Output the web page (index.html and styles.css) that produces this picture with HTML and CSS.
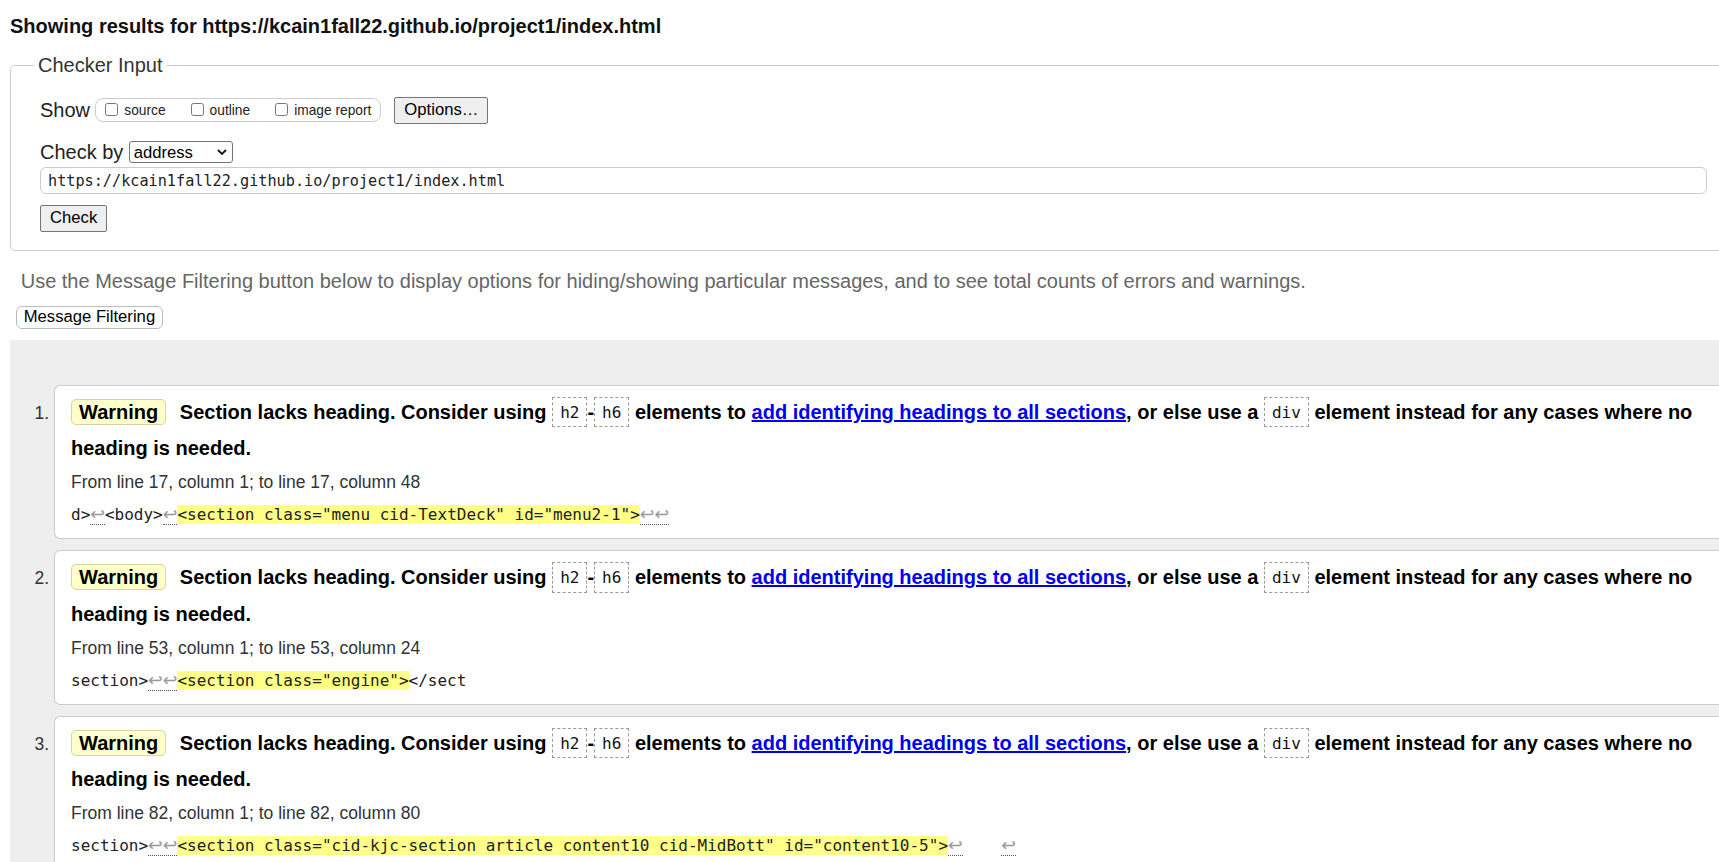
FILE: index.html
```html
<!DOCTYPE html>
<html lang="en">
<head>
<meta charset="utf-8">
<title>Showing results for https://kcain1fall22.github.io/project1/index.html</title>
<link rel="stylesheet" href="styles.css">
</head>
<body>
<div class="page">
  <h2 class="title">Showing results for https://kcain1fall22.github.io/project1/index.html</h2>
  <fieldset class="checker">
    <legend>Checker Input</legend>
    <div class="row row-show">
      <span class="label">Show</span>
      <span class="opts">
        <label class="opt"><input type="checkbox">source</label>
        <label class="opt"><input type="checkbox">outline</label>
        <label class="opt"><input type="checkbox">image report</label>
      </span>
      <button class="btn btn-options" type="button">Options…</button>
    </div>
    <div class="row row-by">
      <span class="label">Check by</span>
      <span class="select-wrap">
        <select class="select"><option>address</option></select>
        <svg class="chev" width="10" height="6" viewBox="0 0 10 6"><path d="M1 1 L5 5 L9 1" fill="none" stroke="#111" stroke-width="1.8"/></svg>
      </span>
    </div>
    <input class="url" type="text" value="https://kcain1fall22.github.io/project1/index.html">
    <div class="row row-check">
      <button class="btn" type="button">Check</button>
    </div>
  </fieldset>
  <p class="hint">Use the Message Filtering button below to display options for hiding/showing particular messages, and to see total counts of errors and warnings.</p>
  <button class="filter-btn" type="button">Message Filtering</button>
  <div class="results">
    <ol class="messages">
      <li class="msg">
        <p class="message"><span class="badge">Warning</span> Section lacks heading. Consider using <code class="code">h2</code>-<code class="code">h6</code> elements to <a href="#">add identifying headings to all sections</a>, or else use a <code class="code">div</code> element instead for any cases where no heading is needed.</p>
        <p class="location">From line 17, column 1; to line 17, column 48</p>
        <p class="extract">d&gt;<span class="lf">↩</span>&lt;body&gt;<span class="lf">↩</span><span class="hl">&lt;section class="menu cid-TextDeck" id="menu2-1"&gt;</span><span class="lf">↩↩</span></p>
      </li>
      <li class="msg">
        <p class="message"><span class="badge">Warning</span> Section lacks heading. Consider using <code class="code">h2</code>-<code class="code">h6</code> elements to <a href="#">add identifying headings to all sections</a>, or else use a <code class="code">div</code> element instead for any cases where no heading is needed.</p>
        <p class="location">From line 53, column 1; to line 53, column 24</p>
        <p class="extract">section&gt;<span class="lf">↩↩</span><span class="hl">&lt;section class="engine"&gt;</span>&lt;/sect</p>
      </li>
      <li class="msg">
        <p class="message"><span class="badge">Warning</span> Section lacks heading. Consider using <code class="code">h2</code>-<code class="code">h6</code> elements to <a href="#">add identifying headings to all sections</a>, or else use a <code class="code">div</code> element instead for any cases where no heading is needed.</p>
        <p class="location">From line 82, column 1; to line 82, column 80</p>
        <p class="extract">section&gt;<span class="lf">↩↩</span><span class="hl">&lt;section class="cid-kjc-section article content10 cid-MidBott" id="content10-5"&gt;</span><span class="lf">↩</span>    <span class="lf">↩</span></p>
      </li>
    </ol>
  </div>
</div>
</body>
</html>
```

FILE: styles.css
```css
html, body {
  margin: 0;
  padding: 0;
  overflow: hidden;
  background: #fff;
}

body {
  font-family: "Liberation Sans", Arial, sans-serif;
  color: #222;
}

.page {
  width: 1727px;
  padding: 0 10px;
}

.title {
  margin: 15px 0 15.6px;
  font-size: 20px;
  line-height: 23px;
  font-weight: bold;
  color: #111;
}

.checker {
  margin: 0;
  min-width: 0;
  padding: 0 29px 18px;
  border: 1px solid #ccc;
  border-radius: 5px;
}

.checker legend {
  margin-left: -6px;
  padding: 0 4px;
  font-size: 20px;
  line-height: 23px;
  color: #333;
}

.row {
  display: flex;
  align-items: center;
}

.label {
  font-size: 20px;
  line-height: 23px;
  margin-right: 5.3px;
  color: #222;
}

.row-show {
  margin-top: 20px;
  height: 27px;
}

.opts {
  display: flex;
  align-items: center;
  gap: 25px;
  height: 24px;
  box-sizing: border-box;
  padding: 0 9px;
  border: 1px solid #ccc;
  border-radius: 8px;
  font-size: 13.75px;
  color: #222;
}

.opt {
  display: flex;
  align-items: center;
}

.opt input {
  width: 13px;
  height: 13px;
  margin: 0 6px 1px 0;
}

.btn {
  height: 27px;
  padding: 0 9px;
  background: #efefef;
  border: 1px solid #767676;
  border-radius: 2px;
  font-family: "Liberation Sans", Arial, sans-serif;
  font-size: 16.67px;
  color: #000;
}

.btn-options {
  margin-left: 13px;
}

.row-by {
  margin-top: 17.4px;
  height: 23px;
}

.select-wrap {
  position: relative;
  display: inline-block;
  height: 22px;
}

.select {
  appearance: none;
  -webkit-appearance: none;
  display: block;
  width: 104px;
  height: 22px;
  box-sizing: border-box;
  padding: 0 0 0 4px;
  border: 1px solid #767676;
  border-radius: 3px;
  background: #fff;
  font-family: "Liberation Sans", Arial, sans-serif;
  font-size: 16.67px;
  color: #000;
}

.chev {
  position: absolute;
  right: 6px;
  top: 8px;
  pointer-events: none;
}

.url {
  display: block;
  width: 100%;
  box-sizing: border-box;
  height: 27px;
  margin: 3.3px 0 0;
  padding: 0 7px;
  border: 1px solid #ccc;
  border-radius: 6px;
  font-family: "DejaVu Sans Mono", "Liberation Mono", monospace;
  font-size: 15.2px;
  color: #222;
  background: #fff;
}

.row-check {
  margin-top: 10.7px;
}

.hint {
  margin: 19.2px 0 0 10.7px;
  font-size: 20px;
  line-height: 23px;
  color: #666;
}

.filter-btn {
  display: block;
  height: 23.6px;
  margin: 12.5px 0 0 5.7px;
  padding: 0 7px;
  background: #fff;
  border: 1px solid #bbb;
  border-radius: 6px;
  font-family: "Liberation Sans", Arial, sans-serif;
  font-size: 16.67px;
  color: #000;
}

.results {
  margin-top: 10.7px;
  padding: 45px 0 60px 44px;
  background: #eee;
}

.messages {
  margin: 0;
  padding: 0;
  list-style: decimal outside;
}

.msg {
  padding: 8px 16px 7px;
  background: #fff;
  border: 1px solid #ccc;
  border-right: none;
  border-radius: 6px 0 0 6px;
  font-size: 17.5px;
  color: #333;
}

.msg + .msg {
  margin-top: 11px;
}

.msg::marker {
  color: #333;
}

.message {
  margin: 0;
  font-size: 20px;
  line-height: 36px;
  font-weight: bold;
  color: #000;
}

.badge {
  padding: 1px 7px;
  margin-right: 8px;
  background: #ffc;
  border: 1px solid #d8d3a0;
  border-radius: 5px;
}

.code {
  font-family: "DejaVu Sans Mono", "Liberation Mono", monospace;
  font-size: 16px;
  font-weight: normal;
  padding: 4.5px 7px 5px;
  border: 1px dashed #999;
  vertical-align: 1.5px;
  color: #111;
}

.message a {
  color: #00e;
  text-decoration: underline;
}

.location {
  margin: 2px 0 0;
  font-size: 17.5px;
  line-height: 28px;
  color: #333;
}

.extract {
  margin: 3px 0 0;
  font-family: "DejaVu Sans Mono", "Liberation Mono", monospace;
  font-size: 16px;
  line-height: 32px;
  white-space: pre;
  color: #222;
}

.lf {
  font-family: "DejaVu Sans", sans-serif;
  font-size: 17.5px;
  line-height: 1;
  color: #999;
  border-bottom: 1px dotted #555;
}

.hl {
  background: #ff8;
}
```
